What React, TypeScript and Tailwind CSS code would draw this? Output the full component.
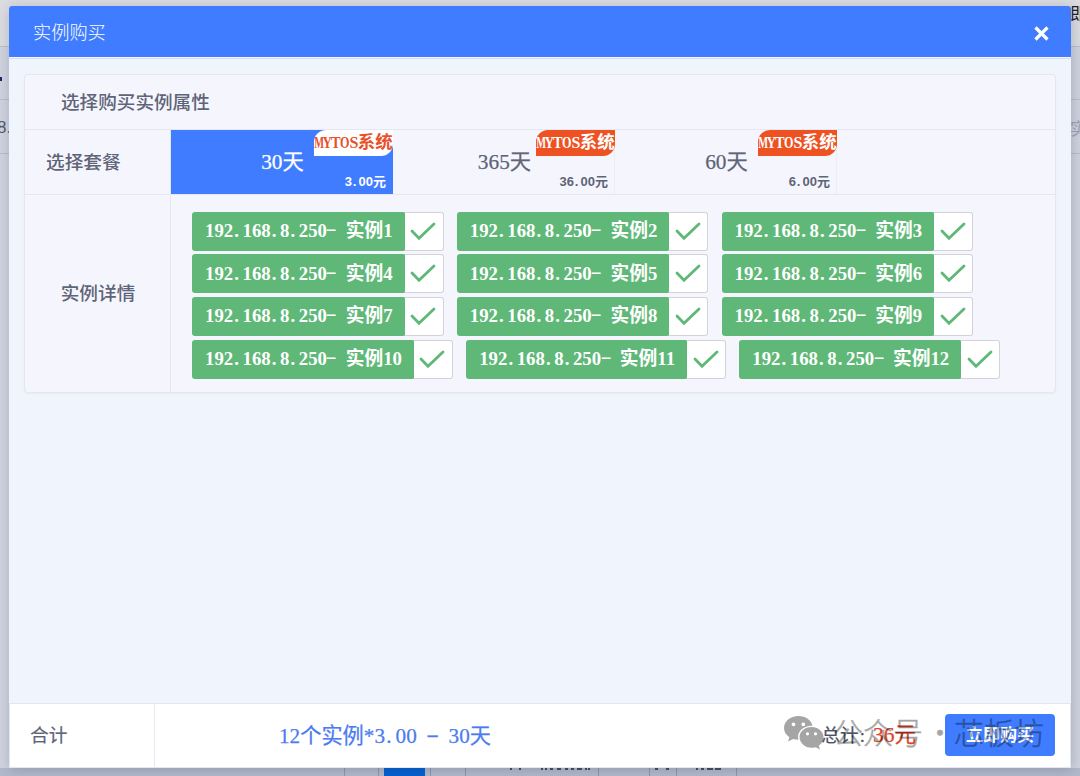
import React from "react";

const GLYPH_SCALE: Record<string, string> = {
  M: "scale-x-[0.6]",
  Y: "scale-x-[0.76]",
  T: "scale-x-[0.82]",
  O: "scale-x-[0.7]",
  S: "scale-x-[0.92]",
  "-": "scale-x-[1.8] -translate-y-[0.1em]",
};

/** Sets Latin characters in half-em cells, as wide as half a Chinese character. */
function Cells({ text }: { text: string }) {
  return (
    <span className="whitespace-nowrap">
      {Array.from(text).map((ch, i) =>
        /[MYTOS.\-* :]/.test(ch) ? (
          <span
            key={i}
            className={`inline-flex w-[0.5em] whitespace-pre ${ch === "." || ch === ":" ? "justify-start pl-[0.06em]" : "justify-center"}`}
          >
            <span className={`inline-block ${GLYPH_SCALE[ch] ?? ""}`}>{ch}</span>
          </span>
        ) : (
          <React.Fragment key={i}>{ch}</React.Fragment>
        ),
      )}
    </span>
  );
}

const plans = [
  { days: "30天", price: "3.00元", active: true },
  { days: "365天", price: "36.00元", active: false },
  { days: "60天", price: "6.00元", active: false },
];

function Plan({ days, price, active }: { days: string; price: string; active: boolean }) {
  return (
    <div
      className={`relative flex h-16 w-[222px] items-center justify-center border-r pt-px pl-[2px] text-[21.3px] ${
        active ? "border-[#3f7cff] bg-[#3f7cff] text-white" : "border-[#eceef6]"
      }`}
    >
      <span className="[-webkit-text-stroke:0.25px]">
        <Cells text={days} />
      </span>
      <div
        className={`absolute top-0 -right-px flex h-[26px] w-[79px] items-center justify-center overflow-hidden rounded-tl-[12px] rounded-br-[12px] text-[17.4px] font-bold leading-none ${
          active ? "bg-white text-[#e8502a]" : "bg-[#ee5222] text-white"
        }`}
      >
        <Cells text="MYTOS系统" />
      </div>
      <div className="absolute right-[6px] bottom-[5px] font-['Liberation_Sans','Noto_Sans_CJK_SC',sans-serif] text-[13px] leading-[15px] font-bold">
        <Cells text={price} />
      </div>
    </div>
  );
}

function Instance({ n }: { n: number }) {
  return (
    <div className="mr-[13.3px] mb-[3.7px] flex h-[39px]">
      <div className="flex items-center rounded-[3px] bg-[#5fb878] px-[13px] text-[18.75px] font-bold text-white">
        <Cells text={`192.168.8.250- 实例${n}`} />
      </div>
      <div className="-ml-px flex w-[39px] items-center justify-center rounded-r-[3px] border border-l-0 border-[#d2d2d8] bg-white pr-px pb-px">
        <svg width="26" height="20" viewBox="0 0 26 20" fill="none" stroke="#5fb878" strokeWidth="2.8">
          <path d="M2 10 9 17.2 24 3" strokeLinecap="round" strokeLinejoin="miter" />
        </svg>
      </div>
    </div>
  );
}

function Backdrop() {
  return (
    <div className="absolute inset-0 overflow-hidden bg-[#d0d4df]">
      <div className="h-[47px] border-b border-[#b9bfcd] bg-[#dcdde1]" />
      <div className="h-[53px] border-b border-[#b9bfcd]" />
      <div className="h-[54px] border-b border-[#b9bfcd]" />
      <div className="absolute top-[77px] left-0 h-1 w-[2px] bg-[#27206f]" />
      <div className="absolute top-[118px] -left-[3px] font-['Liberation_Sans'] text-[17px] leading-5 text-[#555b6c]">8.</div>
      <div className="absolute top-[5px] left-[1070px] text-[17px] leading-5 text-[#1e2028]">即</div>
      <div className="absolute top-[120px] left-[1070px] text-[17px] leading-5 text-[#9fa5b3]">实</div>
      <div className="absolute right-0 bottom-0 left-0 flex h-2 bg-[#b3bacb]">
        <div className="w-[345px] border-r border-[#8f97a8]" />
        <div className="w-[34px] border-r border-[#8f97a8]" />
        <div className="ml-[5px] w-[41px] bg-[#0360d2]" />
        <div className="w-[6px] border-r border-[#8f97a8]" />
        <div className="w-[35px] border-r border-[#8f97a8]" />
        <div className="w-[133px] border-r border-[#8f97a8]" />
        <div className="w-[51px] border-r border-[#8f97a8]" />
        <div className="w-[27px] border-r border-[#8f97a8]" />
        <div className="w-[60px] border-r border-[#8f97a8]" />
      </div>
    </div>
  );
}

function BottomFragments() {
  return (
    <svg className="absolute bottom-0 left-[500px]" width="240" height="8" viewBox="0 0 240 8" stroke="#24272f" strokeWidth="1.6">
      <path d="M10 1h2M19 1h2M41 1h2M45 1h2M50 1h3M57 1h4M65 1h3M71 1h3M77 1h5M85 1h2M88 1h2M155 1h3M166 1h3M196 1h2M201 1h3M207 1h6M215 1h6" />
    </svg>
  );
}

function Watermark() {
  return (
    <div className="pointer-events-none absolute top-[8px] left-[773px] flex items-center text-[#000000] opacity-35">
      <svg width="41" height="36" viewBox="0 0 41 36" fill="currentColor" fillRule="evenodd">
        <path d="M15.500 1C7.400 1 1 6.400 1 13c0 3.800 2.100 7 5.400 9.200L5 26.500l5.200-2.600c1.700.5 3.400.8 5.200.8A10.800 10.800 0 0 1 15 22c0-6.300 6-11.300 13.500-11.300h1C28.300 5.200 22.600 1 15.500 1ZM10.500 7.400a1.900 1.900 0 1 1 0 3.800 1.900 1.900 0 0 1 0-3.800ZM20.300 7.400a1.900 1.900 0 1 1 0 3.800 1.900 1.900 0 0 1 0-3.800Z" />
        <path d="M28.500 12C21.700 12 16.500 16.500 16.500 22s5.200 10.800 12 10.800c1.500 0 2.900-.2 4.200-.6l4.300 2.300-1.200-3.800c2.800-1.900 4.700-5.100 4.700-8.700 0-5.500-5.200-10-12-10ZM24.500 17.200a1.600 1.600 0 1 1 0 3.200 1.600 1.600 0 0 1 0-3.200ZM32.500 17.200a1.600 1.600 0 1 1 0 3.200 1.600 1.600 0 0 1 0-3.200Z" />
      </svg>
      <div className="ml-[9px] flex items-center pb-[3px] font-['Noto_Sans_CJK_SC',sans-serif] text-[30px] leading-[38px] font-light whitespace-nowrap [-webkit-text-stroke:0.5px]">
        <span>公众号</span>
        <span className="w-[31px] pl-[2px] text-center">·</span>
        <span>芯板坊</span>
      </div>
    </div>
  );
}

export default function App() {
  return (
    <div className="relative h-[776px] w-[1080px] overflow-hidden pt-[6px] pl-[9px] font-['Liberation_Serif','Noto_Sans_CJK_SC',sans-serif] text-[#5f6478]">
      <Backdrop />
      <BottomFragments />
      <div className="relative flex h-[762px] w-[1062px] flex-col overflow-visible rounded-[3px] bg-[#f0f4fd] shadow-[1px_2px_14px_rgba(40,50,90,0.25)]">
        <header className="flex h-[51px] shrink-0 items-center justify-between rounded-t-[3px] bg-[#3f7cff] pr-[22px] pl-[24px] text-[18.200px] font-light text-white">
          <span className="pt-[4px]">实例购买</span>
          <svg className="mt-[4px]" width="15" height="15" viewBox="0 0 15 15" stroke="currentColor" strokeWidth="3.200">
            <path d="M1.500 1.500l12 12M13.500 1.500l-12 12" />
          </svg>
        </header>
        <div className="h-[2px] shrink-0 border-b border-[#d8dfec] bg-[#f5f8ff]" />
        <main className="flex-1 px-[15px] pt-[15px]">
          <section className="flex h-[319px] flex-col rounded-sm border border-[#e4e7f0] bg-[#f5f6fd] shadow-[0_1px_2px_rgba(0,0,0,0.04)]">
            <div className="flex h-[55px] shrink-0 items-center border-b border-[#e4e7ef] pt-[2px] pl-[36px] text-[18.600px] font-medium">
              选择购买实例属性
            </div>
            <div className="flex h-[65px] shrink-0 border-b border-[#e4e7ef]">
              <div className="flex w-[146px] items-center border-r border-[#e4e7ef] pt-px pl-[21px] text-[18.670px] font-medium">选择套餐</div>
              {plans.map((p) => (
                <Plan key={p.days} {...p} />
              ))}
            </div>
            <div className="flex flex-1">
              <div className="flex w-[146px] shrink-0 items-center justify-center border-r border-[#e4e7ef] pl-px text-[18.670px] font-medium">实例详情</div>
              <div className="flex flex-1 flex-wrap content-start pt-[16.500px] pl-[21px]">
                {Array.from({ length: 12 }, (_, i) => (
                  <Instance key={i} n={i + 1} />
                ))}
              </div>
            </div>
          </section>
        </main>
        <footer className="relative flex h-[65px] shrink-0 border border-[#e2e6ef] bg-white">
          <div className="flex w-[145px] shrink-0 items-center border-r border-[#e6e9f1] pl-[20px] text-[18.670px] [-webkit-text-stroke:0.2px]">合计</div>
          <div className="flex flex-1 items-center pt-[2px] pl-[124px] text-[21.200px] text-[#4c7cf0] [-webkit-text-stroke:0.25px]">
            <Cells text="12个实例*3.00 - 30天" />
          </div>
          <div className="flex items-center pr-[15px] pb-[2px]">
            <span className="pt-[2px] text-[18.670px] text-[#4c5265] [-webkit-text-stroke:0.2px]">
              <Cells text="总计:" />
            </span>
            <span className="mr-[29px] ml-[5px] pt-[2px] text-[21.500px] text-[#e0452b] [-webkit-text-stroke:0.25px]">36元</span>
            <button className="flex h-[42px] w-[110px] items-center justify-center rounded-[4px] bg-[#3f7cff] pt-[2px] text-[17px] font-bold text-white">
              立即购买
            </button>
          </div>
          <Watermark />
        </footer>
      </div>
    </div>
  );
}
